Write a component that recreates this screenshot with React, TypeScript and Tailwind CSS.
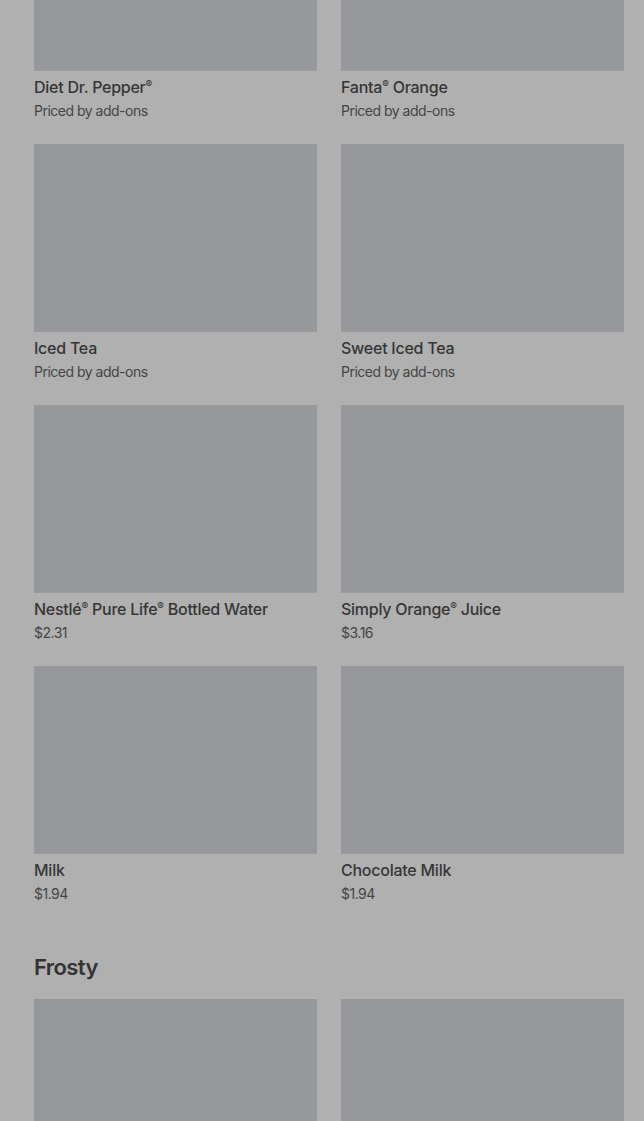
import React from "react";

type Item = { name: React.ReactNode; sub: string };

const R = () => <span className="relative -top-[5px] text-[10px] leading-none">®</span>;

const drinks: Item[] = [
  { name: <>Diet Dr. Pepper<R /></>, sub: "Priced by add-ons" },
  { name: <>Fanta<R /> Orange</>, sub: "Priced by add-ons" },
  { name: "Iced Tea", sub: "Priced by add-ons" },
  { name: "Sweet Iced Tea", sub: "Priced by add-ons" },
  { name: <>Nestlé<R /> Pure Life<R /> Bottled Water</>, sub: "$2.31" },
  { name: <>Simply Orange<R /> Juice</>, sub: "$3.16" },
  { name: "Milk", sub: "$1.94" },
  { name: "Chocolate Milk", sub: "$1.94" },
];

function Card({ item }: { item: Item }) {
  return (
    <div className="flex flex-col">
      <div className="h-[188px] bg-[#96989c] border-b border-[#9a9c9f]" />
      <div className="mt-[4px] text-[16px] leading-6 font-medium text-[#363636] tracking-[-0.25px]">{item.name}</div>
      <div className="mt-[2px] text-[14px] leading-5 text-[#454545] tracking-[-0.5px]">{item.sub}</div>
    </div>
  );
}

export default function App() {
  return (
    <div
      className="min-h-[1121px] h-[1121px] overflow-hidden bg-[#b0b0b0] pl-[34px] pr-[20px]"
      style={{ fontFamily: "Inter, 'Noto Sans', sans-serif" }}
    >
      <div className="-mt-[117px] grid grid-cols-2 gap-x-[24px] gap-y-[23px]">
        {drinks.map((d, i) => (
          <Card key={i} item={d} />
        ))}
      </div>
      <h2 className="mt-[47px] mb-[16px] text-[22px] leading-8 font-semibold tracking-[-0.6px] text-[#333]">Frosty</h2>
      <div className="grid grid-cols-2 gap-x-[24px] gap-y-[24px]">
        <div className="h-[188px] bg-[#96989c]" />
        <div className="h-[188px] bg-[#96989c]" />
      </div>
    </div>
  );
}
